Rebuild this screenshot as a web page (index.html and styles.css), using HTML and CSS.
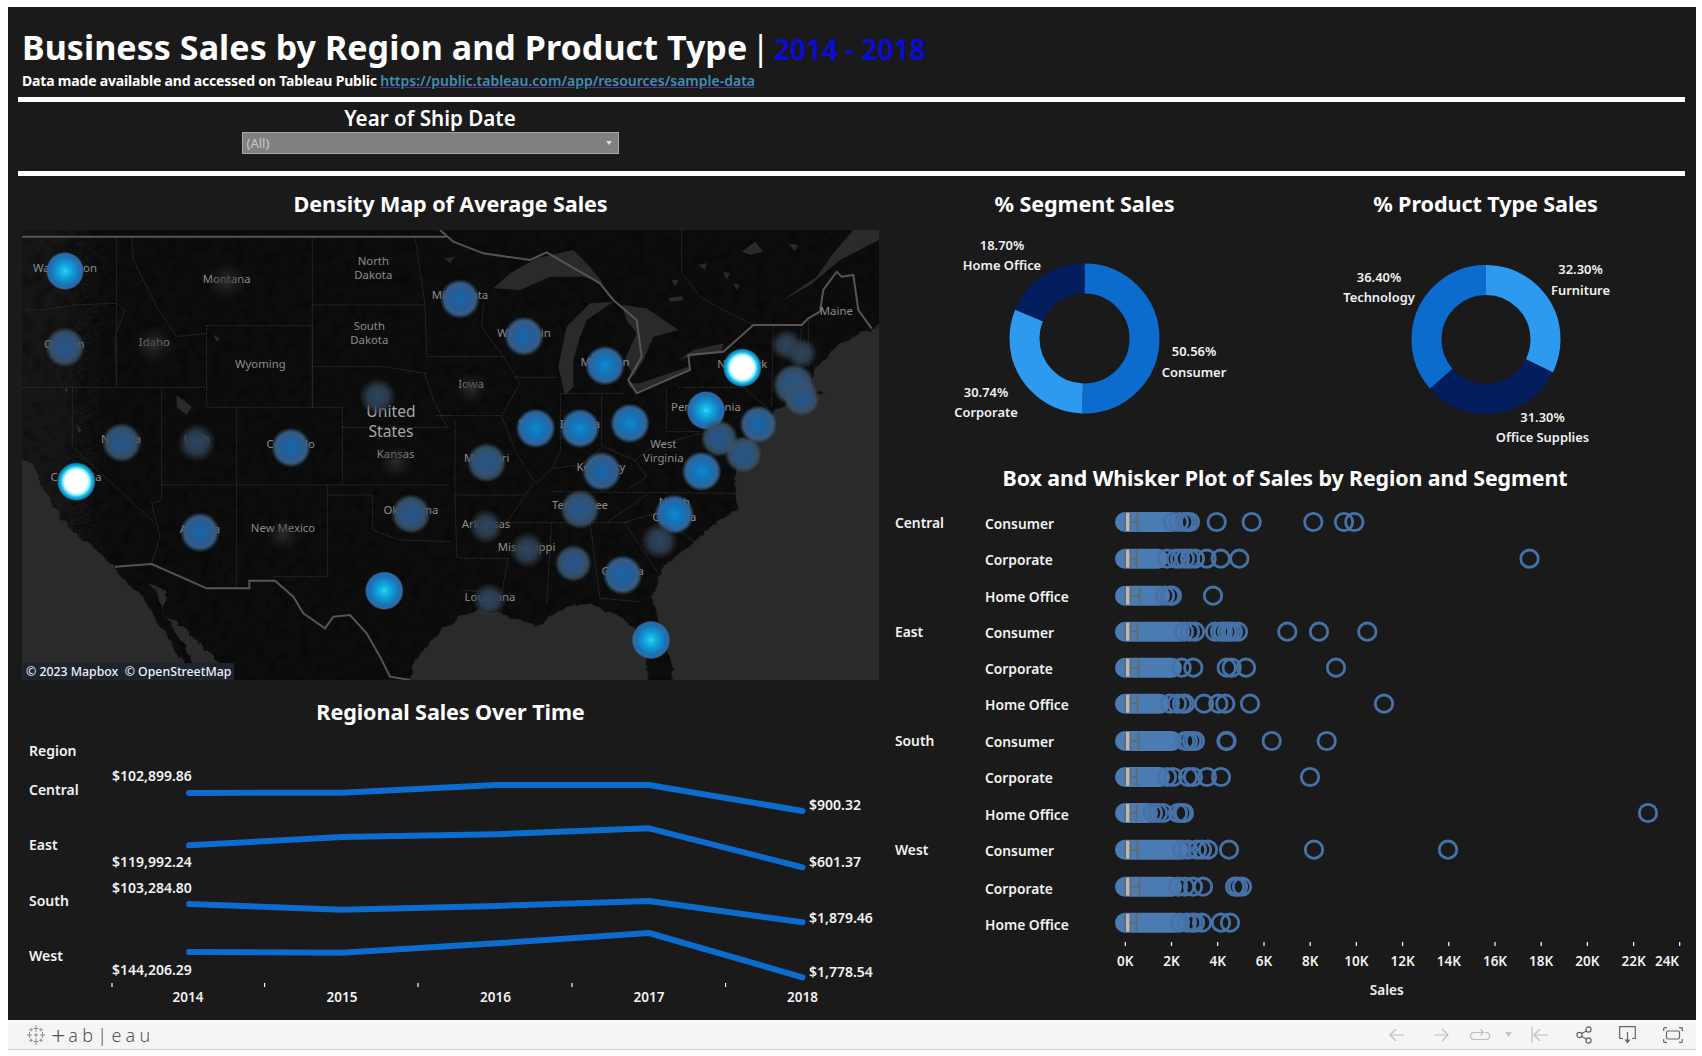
FILE: index.html
```html
<!DOCTYPE html>
<html lang="en">
<head>
<meta charset="utf-8">
<title>Business Sales by Region and Product Type</title>
<link rel="stylesheet" href="styles.css">
</head>
<body>
<main class="viz">
  <header class="head">
    <h1 class="title">Business Sales by Region and Product Type<span class="bar"> | </span><span class="years">2014 - 2018</span></h1>
    <p class="source">Data made available and accessed on Tableau Public <a class="link" href="#">https://public.tableau.com/app/resources/sample-data</a></p>
  </header>
  <div class="rule"></div>
  <section class="filter">
    <div class="filter-label">Year of Ship Date</div>
    <div class="select"><span>(All)</span><i class="caret"></i></div>
  </section>
  <div class="rule"></div>
  <div class="columns">
    <div class="col-left">
      <h2 class="chart-title">Density Map of Average Sales</h2>
      <svg class="map" viewBox="22 230 857 450" width="857" height="450">
        <defs>
          <linearGradient id="land" x1="0" x2="1" y1="0" y2="0">
            <stop offset="0" stop-color="#131313"/><stop offset=".5" stop-color="#0a0a0a"/><stop offset="1" stop-color="#0e0e0e"/>
          </linearGradient>
          <filter id="rough" x="-2%" y="-2%" width="104%" height="104%">
            <feTurbulence type="fractalNoise" baseFrequency=".035" numOctaves="3" seed="4"/>
            <feDisplacementMap in="SourceGraphic" scale="22" xChannelSelector="R" yChannelSelector="G"/>
          </filter>
          <filter id="mottle" x="0" y="0" width="100%" height="100%">
            <feTurbulence type="fractalNoise" baseFrequency=".03" numOctaves="3" seed="9"/>
            <feColorMatrix values="0 0 0 0 0  0 0 0 0 0  0 0 0 0 0  2.2 0 0 0 -1"/>
          </filter>
          <radialGradient id="h-white"><stop offset="0" stop-color="#fff"/><stop offset=".56" stop-color="#fff"/><stop offset=".68" stop-color="#a6f0ff"/><stop offset=".8" stop-color="#12c0e6"/><stop offset=".93" stop-color="#0f7fb4"/><stop offset="1" stop-color="#1b5f8e" stop-opacity=".15"/></radialGradient>
          <radialGradient id="h-strong"><stop offset="0" stop-color="#3fd8f5"/><stop offset=".12" stop-color="#1cc0ea"/><stop offset=".42" stop-color="#109ad6"/><stop offset=".75" stop-color="#1a72b6"/><stop offset=".92" stop-color="#2f69a3"/><stop offset="1" stop-color="#2f69a3" stop-opacity=".08"/></radialGradient>
          <radialGradient id="h-mid"><stop offset="0" stop-color="#0c8ccf"/><stop offset=".42" stop-color="#1472b8"/><stop offset=".8" stop-color="#2f6499"/><stop offset="1" stop-color="#35648f" stop-opacity="0"/></radialGradient>
          <radialGradient id="h-medlow"><stop offset="0" stop-color="#1368ac"/><stop offset=".5" stop-color="#275d95"/><stop offset=".78" stop-color="#355c84"/><stop offset="1" stop-color="#3a5a78" stop-opacity="0"/></radialGradient>
          <radialGradient id="h-low"><stop offset="0" stop-color="#24558a"/><stop offset=".55" stop-color="#2f5278"/><stop offset=".78" stop-color="#3a5468" stop-opacity=".85"/><stop offset="1" stop-color="#3a4e60" stop-opacity="0"/></radialGradient>
          <radialGradient id="h-vlow"><stop offset="0" stop-color="#2c4660"/><stop offset=".55" stop-color="#2d3e50" stop-opacity=".9"/><stop offset="1" stop-color="#2f3a45" stop-opacity="0"/></radialGradient>
          <radialGradient id="h-faint"><stop offset="0" stop-color="#333" stop-opacity=".8"/><stop offset="1" stop-color="#222" stop-opacity="0"/></radialGradient>
          <clipPath id="land-clip"><path d="M60 30H2637V310L2615 325L2520 370L2450 440L2430 500L2470 520L2320 570L2310 590L2250 640L2220 720L2205 760L2210 820L2210 870L2160 900L2080 970L1990 1040L1960 1130L1980 1230L2015 1330L2020 1380H1945L1940 1320L1900 1225L1880 1200L1770 1150L1700 1160L1610 1220L1520 1185L1440 1170L1380 1190L1320 1235L1290 1270L1240 1330L1230 1380H590L540 1310L470 1200L430 1130L380 1090L340 1040L290 990L240 950L180 890L130 800L100 735L60 705Z"/></clipPath>
        </defs>
        <rect class="water" x="22" y="230" width="857" height="450"/>
        <g transform="translate(0 220) scale(.33333)">
          <path class="land rough" d="M30 10H2660V310L2615 325L2520 370L2450 440L2430 500L2470 520L2320 570L2310 590L2250 640L2220 720L2205 760L2210 820L2210 870L2160 900L2080 970L1990 1040L1960 1130L1980 1230L2015 1330L2020 1400H1945L1940 1320L1900 1225L1880 1200L1770 1150L1700 1160L1610 1220L1520 1185L1440 1170L1380 1190L1320 1235L1290 1270L1240 1330L1230 1400H600L540 1310L470 1200L430 1130L380 1090L340 1040L290 990L240 950L180 890L130 800L100 735L30 690Z"/>
          <rect class="mottle" x="60" y="30" width="2580" height="1350" clip-path="url(#land-clip)"/>
          <path class="water rough" d="M452 1092L500 1110L490 1180L560 1230L650 1320L700 1390H625L570 1310L500 1190Z"/>
          <path class="lake" d="M530 525L575 560L560 585L530 560ZM640 345L660 355L650 365ZM230 610L245 630L235 640ZM195 500L205 510L195 520Z"/>
          <path class="states" d="M350 50V500M395 50L400 120L470 260L530 350L620 340M80 270L130 270L220 255L350 250L375 270L345 350L350 500M66 502H620M620 317H937V562H620ZM937 50V562M937 255H1275M937 440H1150L1275 460M217 502V680L460 905M485 502V840L455 850L480 950L455 1030M710 562V1100M937 562H1027V795M485 795H1350M982 795V1070H820M982 825H1118V930L1200 960L1350 965M1027 622H1350M1245 50L1275 255L1280 410H1350M1275 460L1300 540L1340 620M1310 587H1350"/>
          <path class="border" d="M66 50H1340M345 1040L455 1032L620 1105H748V1082H825L880 1130L910 1180L975 1225L1000 1190L1050 1185L1100 1240L1140 1310L1170 1370L1230 1380"/>
        </g>
        <g transform="translate(440 220) scale(.33333)">
          <path class="lake" d="M160 205L210 160L290 115L400 90L440 130L490 190L430 170L330 170L240 210Z"/>
          <path class="lake" d="M355 440L380 320L450 250L520 245L440 300L420 350L400 420L400 500L375 525Z"/>
          <path class="lake" d="M545 255L620 265L715 330L640 350L610 420L580 470L555 420L590 340L560 300Z"/>
          <path class="lake" d="M560 490L590 520L750 450L745 440L600 490Z"/>
          <path class="lake" d="M715 420L760 390L850 370L845 395L750 410Z"/>
          <path class="lake" d="M1317 30H1240L1180 100L1130 170L1020 245L1110 195L1200 120L1317 60Z"/>
          <path class="lake" d="M685 235L725 228L730 240L690 245ZM905 95L945 65L970 95L930 105ZM775 135L800 130L795 150ZM850 155L870 160L860 180ZM1045 70L1075 75L1065 95ZM695 180L715 180L705 200ZM880 190L900 195L890 210ZM15 115L45 110L30 130Z"/>
          <path class="states" d="M0 410H190M130 250L125 320L190 410L240 490L200 560L185 590L230 700L280 780L290 790M0 587H185M225 472H350M362 520V690L340 740L290 790M485 520V680M362 520H550M680 505V635H780M715 502H910L990 570M335 815L885 820M45 600V825H250M45 825L50 1010L70 1015H205M200 908H575M335 908L320 1150M450 908L480 1135L605 1145M555 910L655 1060M555 905L650 880L770 970M505 905L625 820M585 720L640 680L780 640M585 720L620 770L560 810M340 745L420 735L490 680L585 720M1000 320L995 560M1085 315L1075 440M1105 300V440M205 1015L185 1120L60 1110M200 908L280 790M725 30V160L780 230L850 270L940 315"/>
          <path class="border" d="M0 30L40 65L130 100L270 120L320 97L480 190L520 240L590 300L605 410L565 480L590 520L750 450L745 405L850 395L940 315H1085L1105 295L1140 275L1150 210L1190 155L1205 170L1240 165L1255 270L1295 325"/>
        </g>
        <g class="map-labels" transform="translate(0 220) scale(.33333)">
          <text x="195" y="143">Washington</text><text x="680" y="175">Montana</text>
          <text x="1120" y="122">North</text><text x="1120" y="163">Dakota</text>
          <text x="1108" y="316">South</text><text x="1108" y="358">Dakota</text>
          <text x="463" y="364">Idaho</text><text x="193" y="370">Oregon</text>
          <text x="781" y="432">Wyoming</text><text x="363" y="656">Nevada</text>
          <text x="590" y="655">Utah</text><text x="872" y="671">Colorado</text>
          <text x="228" y="771">California</text><text x="600" y="925">Arizona</text>
          <text x="849" y="924">New Mexico</text><text x="1187" y="700">Kansas</text>
          <text class="country" x="1173" y="573">United</text><text class="country" x="1173" y="633">States</text>
          <text x="1233" y="870">Oklahoma</text>
          <text x="1380" y="225">Minnesota</text><text x="1572" y="337">Wisconsin</text>
          <text x="1413" y="492">Iowa</text><text x="1815" y="425">Michigan</text>
          <text x="1607" y="612">Illinois</text><text x="1740" y="612">Indiana</text>
          <text x="1460" y="713">Missouri</text><text x="1803" y="741">Kentucky</text>
          <text x="1990" y="671">West</text><text x="1990" y="713">Virginia</text>
          <text x="2118" y="561">Pennsylvania</text><text x="2227" y="431">New York</text>
          <text x="2509" y="273">Maine</text><text x="1740" y="855">Tennessee</text>
          <text x="1458" y="911">Arkansas</text><text x="1580" y="979">Mississippi</text>
          <text x="1470" y="1129">Louisiana</text><text x="1868" y="1051">Georgia</text>
          <text x="2023" y="845">North</text><text x="2023" y="890">Carolina</text>
        </g>
        <g transform="translate(0 220) scale(.33333)">
          <circle class="spot faint" cx="680" cy="185" r="60"/><circle class="spot faint" cx="463" cy="375" r="60"/>
          <circle class="spot faint" cx="849" cy="945" r="50"/><circle class="spot faint" cx="1187" cy="725" r="50"/>
          <circle class="spot faint" cx="1413" cy="505" r="50"/>
          <circle class="spot vlow" cx="1133" cy="530" r="56"/><circle class="spot low" cx="195" cy="382" r="60"/>
          <circle class="spot strong" cx="195" cy="153" r="57"/><circle class="spot low" cx="365" cy="668" r="60"/>
          <circle class="spot vlow" cx="590" cy="668" r="58"/><circle class="spot medlow" cx="873" cy="683" r="60"/>
          <circle class="spot white" cx="229" cy="785" r="58"/><circle class="spot medlow" cx="600" cy="937" r="60"/>
          <circle class="spot strong" cx="1153" cy="1112" r="58"/><circle class="spot low" cx="1233" cy="882" r="60"/>
          <circle class="spot medlow" cx="1380" cy="237" r="60"/><circle class="spot medlow" cx="1572" cy="349" r="60"/>
          <circle class="spot mid" cx="1815" cy="437" r="60"/><circle class="spot white" cx="2227" cy="443" r="58"/>
          <circle class="spot strong" cx="2118" cy="571" r="58"/><circle class="spot mid" cx="1607" cy="625" r="60"/>
          <circle class="spot mid" cx="1740" cy="625" r="60"/><circle class="spot mid" cx="1890" cy="610" r="60"/>
          <circle class="spot low" cx="1460" cy="728" r="60"/><circle class="spot medlow" cx="1805" cy="754" r="60"/>
          <circle class="spot mid" cx="2105" cy="754" r="60"/><circle class="spot low" cx="2158" cy="655" r="56"/>
          <circle class="spot medlow" cx="2275" cy="613" r="57"/><circle class="spot low" cx="2230" cy="703" r="56"/>
          <circle class="spot low" cx="1740" cy="868" r="60"/><circle class="spot mid" cx="2023" cy="883" r="60"/>
          <circle class="spot vlow" cx="1978" cy="963" r="56"/><circle class="spot vlow" cx="1458" cy="920" r="52"/>
          <circle class="spot vlow" cx="1582" cy="990" r="54"/><circle class="spot low" cx="1720" cy="1030" r="56"/>
          <circle class="spot medlow" cx="1868" cy="1065" r="60"/><circle class="spot vlow" cx="1468" cy="1140" r="52"/>
          <circle class="spot strong" cx="1953" cy="1260" r="58"/>
          <circle class="spot vlow" cx="2360" cy="375" r="48"/><circle class="spot vlow" cx="2405" cy="400" r="48"/>
          <circle class="spot low" cx="2382" cy="495" r="64"/><circle class="spot low" cx="2405" cy="535" r="54"/>
        </g>
        <rect class="credit-bg" x="23" y="663" width="211" height="17"/>
        <text class="credit" x="26" y="671.5">© 2023 Mapbox  © OpenStreetMap</text>
      </svg>
      <h2 class="chart-title chart-title-low">Regional Sales Over Time</h2>
      <svg class="lines" viewBox="22 730 857 290" width="857" height="290">
        <g class="mark-label line-label">
          <text x="29" y="751">Region</text><text x="29" y="790">Central</text><text x="29" y="845">East</text><text x="29" y="901">South</text><text x="29" y="956">West</text>
          <text x="112" y="776">$102,899.86</text><text x="112" y="862">$119,992.24</text><text x="112" y="888">$103,284.80</text><text x="112" y="970">$144,206.29</text>
          <text x="809" y="805">$900.32</text><text x="809" y="862">$601.37</text><text x="809" y="918">$1,879.46</text><text x="809" y="972">$1,778.54</text>
        </g>
        <g class="trend">
          <polyline points="189,793 342,792.7 496.5,785 649,785 802.5,811"/>
          <polyline points="189,845.3 342,837 496.5,834.3 649,828.3 802.5,867.3"/>
          <polyline points="189,904 342,909.7 496.5,906 649,901 802.5,922.3"/>
          <polyline points="189,952 342,952.7 496.5,943.3 649,933 802.5,977.3"/>
        </g>
        <path class="tick" d="M112 983V987M264.6 983V987M418 983V987M572 983V987M725.6 983V987"/>
        <g class="axis-label">
          <text x="188" y="997">2014</text><text x="342" y="997">2015</text><text x="495.5" y="997">2016</text><text x="649" y="997">2017</text><text x="802.5" y="997">2018</text>
        </g>
      </svg>
    </div>
    <div class="col-right">
      <div class="donuts">
        <figure class="donut-panel">
          <h2 class="chart-title">% Segment Sales</h2>
          <svg class="donut" viewBox="884 230 401 226" width="401" height="226">
            <g transform="rotate(-90 1084.5 338.5)">
              <circle class="seg seg-mid" cx="1084.5" cy="338.5" r="60" pathLength="100" stroke-dasharray="50.56 100"/>
              <circle class="seg seg-light" cx="1084.5" cy="338.5" r="60" pathLength="100" stroke-dasharray="30.74 100" stroke-dashoffset="-50.56"/>
              <circle class="seg seg-dark" cx="1084.5" cy="338.5" r="60" pathLength="100" stroke-dasharray="18.7 100" stroke-dashoffset="-81.3"/>
            </g>
            <g class="donut-label">
              <text x="1002" y="245">18.70%</text><text x="1002" y="265">Home Office</text>
              <text x="1194" y="351">50.56%</text><text x="1194" y="372">Consumer</text>
              <text x="986" y="392">30.74%</text><text x="986" y="412">Corporate</text>
            </g>
          </svg>
        </figure>
        <figure class="donut-panel">
          <h2 class="chart-title">% Product Type Sales</h2>
          <svg class="donut" viewBox="1285 230 401 226" width="401" height="226">
            <g transform="rotate(-90 1486 339.5)">
              <circle class="seg seg-light" cx="1486" cy="339.5" r="59.5" pathLength="100" stroke-dasharray="32.3 100"/>
              <circle class="seg seg-dark" cx="1486" cy="339.5" r="59.5" pathLength="100" stroke-dasharray="31.3 100" stroke-dashoffset="-32.3"/>
              <circle class="seg seg-mid" cx="1486" cy="339.5" r="59.5" pathLength="100" stroke-dasharray="36.4 100" stroke-dashoffset="-63.6"/>
            </g>
            <g class="donut-label">
              <text x="1580.5" y="269">32.30%</text><text x="1580.5" y="290">Furniture</text>
              <text x="1379" y="277">36.40%</text><text x="1379" y="297">Technology</text>
              <text x="1542.5" y="417">31.30%</text><text x="1542.5" y="437">Office Supplies</text>
            </g>
          </svg>
        </figure>
      </div>
      <h2 class="chart-title chart-title-box">Box and Whisker Plot of Sales by Region and Segment</h2>
      <svg class="boxes" viewBox="884 502 810 518" width="810" height="518">
        <defs>
          <g id="box"><rect class="box-dark" x="1124.5" y="-9" width="6.5" height="18"/><rect class="box-light" x="1126" y="-9" width="3.5" height="18"/></g>
        </defs>
        <g class="mark-label box-label">
          <text x="895" y="523">Central</text><text x="895" y="632">East</text><text x="895" y="741.5">South</text><text x="895" y="850">West</text>
        </g>
        <g class="mark-label box-label">
          <text x="985" y="524">Consumer</text><text x="985" y="560">Corporate</text><text x="985" y="597">Home Office</text>
          <text x="985" y="633">Consumer</text><text x="985" y="669">Corporate</text><text x="985" y="705.5">Home Office</text>
          <text x="985" y="742.5">Consumer</text><text x="985" y="778.5">Corporate</text><text x="985" y="815">Home Office</text>
          <text x="985" y="851">Consumer</text><text x="985" y="889">Corporate</text><text x="985" y="925">Home Office</text>
        </g>
        <g transform="translate(0 522)"><line class="blob" x1="1125" x2="1170"/><circle class="ring" cx="1173" r="8.7"/><circle class="ring" cx="1179" r="8.7"/><circle class="ring" cx="1184" r="8.7"/><circle class="ring" cx="1187" r="8.7"/><circle class="ring" cx="1190" r="8.7"/><circle class="ring" cx="1216.7" r="8.7"/><circle class="ring" cx="1251.7" r="8.7"/><circle class="ring" cx="1313.3" r="8.7"/><circle class="ring" cx="1344" r="8.7"/><circle class="ring" cx="1354.3" r="8.7"/><use href="#box"/><path class="whisk" d="M1131 0H1137.5M1137.5 -9V9"/></g>
        <g transform="translate(0 558.7)"><line class="blob" x1="1125" x2="1158"/><circle class="ring" cx="1167" r="8.7"/><circle class="ring" cx="1176" r="8.7"/><circle class="ring" cx="1180" r="8.7"/><circle class="ring" cx="1185" r="8.7"/><circle class="ring" cx="1190" r="8.7"/><circle class="ring" cx="1195" r="8.7"/><circle class="ring" cx="1206.7" r="8.7"/><circle class="ring" cx="1220.7" r="8.7"/><circle class="ring" cx="1239.3" r="8.7"/><circle class="ring" cx="1529.5" r="8.7"/><use href="#box"/><path class="whisk" d="M1131 0H1136.5M1136.5 -9V9"/></g>
        <g transform="translate(0 595.7)"><line class="blob" x1="1125" x2="1160"/><circle class="ring" cx="1165" r="8.7"/><circle class="ring" cx="1170" r="8.7"/><circle class="ring" cx="1172" r="8.7"/><circle class="ring" cx="1213" r="8.7"/><use href="#box"/><path class="whisk" d="M1131 0H1139.5M1139.5 -9V9"/></g>
        <g transform="translate(0 631.7)"><line class="blob" x1="1125" x2="1180"/><circle class="ring" cx="1184" r="8.7"/><circle class="ring" cx="1190" r="8.7"/><circle class="ring" cx="1195" r="8.7"/><circle class="ring" cx="1215" r="8.7"/><circle class="ring" cx="1220" r="8.7"/><circle class="ring" cx="1223" r="8.7"/><circle class="ring" cx="1227" r="8.7"/><circle class="ring" cx="1230" r="8.7"/><circle class="ring" cx="1233" r="8.7"/><circle class="ring" cx="1238" r="8.7"/><circle class="ring" cx="1287.3" r="8.7"/><circle class="ring" cx="1319" r="8.7"/><circle class="ring" cx="1367.3" r="8.7"/><use href="#box"/><path class="whisk" d="M1131 0H1137.5M1137.5 -9V9"/></g>
        <g transform="translate(0 667.7)"><line class="blob" x1="1125" x2="1172"/><circle class="ring" cx="1181.7" r="8.7"/><circle class="ring" cx="1193.3" r="8.7"/><circle class="ring" cx="1226.7" r="8.7"/><circle class="ring" cx="1231.7" r="8.7"/><circle class="ring" cx="1246" r="8.7"/><circle class="ring" cx="1336" r="8.7"/><use href="#box"/><path class="whisk" d="M1131 0H1138.5M1138.5 -9V9"/></g>
        <g transform="translate(0 703.7)"><line class="blob" x1="1125" x2="1160"/><circle class="ring" cx="1170" r="8.7"/><circle class="ring" cx="1177" r="8.7"/><circle class="ring" cx="1182" r="8.7"/><circle class="ring" cx="1185" r="8.7"/><circle class="ring" cx="1204" r="8.7"/><circle class="ring" cx="1218.3" r="8.7"/><circle class="ring" cx="1225.3" r="8.7"/><circle class="ring" cx="1250" r="8.7"/><circle class="ring" cx="1384" r="8.7"/><use href="#box"/><path class="whisk" d="M1131 0H1137.5M1137.5 -9V9"/></g>
        <g transform="translate(0 741)"><line class="blob" x1="1125" x2="1172"/><circle class="ring" cx="1185" r="8.7"/><circle class="ring" cx="1188" r="8.7"/><circle class="ring" cx="1192" r="8.7"/><circle class="ring" cx="1195" r="8.7"/><circle class="ring thick" cx="1226.5" r="8.4"/><circle class="ring" cx="1271.7" r="8.7"/><circle class="ring" cx="1326.7" r="8.7"/><use href="#box"/><path class="whisk" d="M1131 0H1138.5M1138.5 -9V9"/></g>
        <g transform="translate(0 777)"><line class="blob" x1="1125" x2="1160"/><circle class="ring" cx="1167" r="8.7"/><circle class="ring" cx="1173" r="8.7"/><circle class="ring" cx="1188" r="8.7"/><circle class="ring" cx="1193" r="8.7"/><circle class="ring" cx="1207" r="8.7"/><circle class="ring" cx="1221" r="8.7"/><circle class="ring" cx="1310" r="8.7"/><use href="#box"/><path class="whisk" d="M1131 0H1136.5M1136.5 -9V9"/></g>
        <g transform="translate(0 813)"><line class="blob" x1="1125" x2="1148"/><circle class="ring" cx="1153" r="8.7"/><circle class="ring" cx="1158" r="8.7"/><circle class="ring" cx="1163" r="8.7"/><circle class="ring" cx="1178" r="8.7"/><circle class="ring" cx="1182" r="8.7"/><circle class="ring" cx="1184" r="8.7"/><circle class="ring" cx="1648" r="8.7"/><use href="#box"/><path class="whisk" d="M1131 0H1136.5M1136.5 -9V9"/></g>
        <g transform="translate(0 849.7)"><line class="blob" x1="1125" x2="1178"/><circle class="ring" cx="1182" r="8.7"/><circle class="ring" cx="1188" r="8.7"/><circle class="ring" cx="1197" r="8.7"/><circle class="ring" cx="1202" r="8.7"/><circle class="ring" cx="1208" r="8.7"/><circle class="ring" cx="1229" r="8.7"/><circle class="ring" cx="1314" r="8.7"/><circle class="ring" cx="1448" r="8.7"/><use href="#box"/><path class="whisk" d="M1131 0H1137.5M1137.5 -9V9"/></g>
        <g transform="translate(0 886.7)"><line class="blob" x1="1125" x2="1172"/><circle class="ring" cx="1178" r="8.7"/><circle class="ring" cx="1185" r="8.7"/><circle class="ring" cx="1193" r="8.7"/><circle class="ring" cx="1203" r="8.7"/><circle class="ring" cx="1235" r="8.7"/><circle class="ring" cx="1238" r="8.7"/><circle class="ring" cx="1242" r="8.7"/><use href="#box"/><path class="whisk" d="M1131 0H1139.5M1139.5 -9V9"/></g>
        <g transform="translate(0 922.7)"><line class="blob" x1="1125" x2="1176"/><circle class="ring" cx="1180" r="8.7"/><circle class="ring" cx="1187" r="8.7"/><circle class="ring" cx="1192" r="8.7"/><circle class="ring" cx="1195" r="8.7"/><circle class="ring" cx="1202" r="8.7"/><circle class="ring" cx="1221" r="8.7"/><circle class="ring" cx="1230" r="8.7"/><use href="#box"/><path class="whisk" d="M1131 0H1136.5M1136.5 -9V9"/></g>
        <path class="tick" d="M1125.3 942V946M1171.5 942V946M1217.7 942V946M1264 942V946M1310.2 942V946M1356.4 942V946M1402.6 942V946M1448.8 942V946M1495 942V946M1541.2 942V946M1587.4 942V946M1633.6 942V946M1679.7 942V946"/>
        <g class="axis-label">
          <text x="1125.3" y="961">0K</text><text x="1171.5" y="961">2K</text><text x="1217.7" y="961">4K</text><text x="1264" y="961">6K</text><text x="1310.2" y="961">8K</text><text x="1356.4" y="961">10K</text><text x="1402.6" y="961">12K</text><text x="1448.8" y="961">14K</text><text x="1495" y="961">16K</text><text x="1541.2" y="961">18K</text><text x="1587.4" y="961">20K</text><text x="1633.6" y="961">22K</text><text x="1667" y="961">24K</text>
          <text x="1386.7" y="990">Sales</text>
        </g>
      </svg>
    </div>
  </div>
</main>
<footer class="toolbar">
  <div class="logo">
    <svg class="logo-mark" viewBox="0 0 20 20" width="20" height="20"><path d="M10 0V7M7.5 3.5H12.5M10 13V20M7.5 16.5H12.5M3.5 7V13M1 10H6M16.5 7V13M14 10H19M5 3V6.5M3.2 4.7H6.8M15 3V6.5M13.2 4.7H16.8M5 13.5V17M3.2 15.3H6.8M15 13.5V17M13.2 15.3H16.8M10 8V12M8 10H12"/></svg>
    <span class="logo-text"><span class="logo-t">+</span>ab|eau</span>
  </div>
  <div class="tools">
    <svg class="tool off t-back" viewBox="0 0 15 14" width="15" height="14"><path d="M15 7H1M7 1L1 7L7 13"/></svg>
    <svg class="tool off t-fwd" viewBox="0 0 15 14" width="15" height="14"><path d="M0 7H14M8 1L14 7L8 13"/></svg>
    <svg class="tool off t-redo" viewBox="0 0 20 12" width="20" height="12"><path d="M13 3.5H4a3.5 3.5 0 0 0 0 7H16a3.5 3.5 0 0 0 0-7H15M10.5 0.5L13.5 3.5L10.5 6.5"/></svg>
    <svg class="t-caret" viewBox="0 0 7 5" width="7" height="5"><path d="M0 0H7L3.5 5Z"/></svg>
    <svg class="tool off t-first" viewBox="0 0 17 16" width="17" height="16"><path d="M1 0V16M17 8H3M9 2L3 8L9 14"/></svg>
    <svg class="tool on t-share" viewBox="0 0 16 18" width="16" height="18"><circle cx="3.5" cy="9" r="2.6"/><circle cx="12.5" cy="3.5" r="2.6"/><circle cx="12.5" cy="14.5" r="2.6"/><path d="M5.8 7.6L10.2 4.9M5.8 10.4L10.2 13.1"/></svg>
    <svg class="tool on t-down" viewBox="0 0 17 18" width="17" height="18"><path d="M4 12.5H.7V.7H16.3V12.5H13M8.5 6V14"/><path class="solid" d="M5.5 13.5H11.5L8.5 17.5Z"/></svg>
    <svg class="tool on t-full" viewBox="0 0 20 16" width="20" height="16"><rect x="3.5" y="4" width="13" height="8" rx="1.5"/><path d="M.7 4V1.5Q.7.7 1.5.7H4M16 .7H18.5Q19.3.7 19.3 1.5V4M.7 12V14.5Q.7 15.3 1.5 15.3H4M16 15.3H18.5Q19.3 15.3 19.3 14.5V12"/></svg>
  </div>
</footer>
</body>
</html>
```

FILE: styles.css
```css
* { box-sizing: border-box; }
html, body { margin: 0; padding: 0; background: #fff; }
body { font-family: "Noto Sans", "Open Sans", sans-serif; color: #fff; width: 1702px; height: 1056px; overflow: hidden; }
svg { display: block; }
svg text { font-family: "Noto Sans", "Open Sans", sans-serif; }

.viz { margin: 7px 6px 0 8px; height: 1013px; background: #1a1a1a; padding: 0 10px 0 10px; }

.head { height: 90px; padding: 20px 0 0 4px; }
.title { margin: 0; font-size: 34px; line-height: 40px; font-weight: 700; letter-spacing: .06px; white-space: pre; }
.bar { font-weight: 400; word-spacing: -5px; }
.years { color: #0b0be0; font-size: 28px; font-weight: 600; letter-spacing: 0; }
.source { margin: 2px 0 0; font-size: 14px; line-height: 19px; font-weight: 700; letter-spacing: -.18px; white-space: nowrap; }
.link { color: #3f8db5; text-decoration: underline; text-decoration-color: #5a2d91; font-weight: 600; letter-spacing: 0; }

.rule { width: 1667px; height: 5px; background: #fff; }

.filter { height: 69px; width: 824px; display: flex; flex-direction: column; align-items: center; padding-top: 2px; }
.filter-label { font-size: 20.6px; line-height: 28px; font-weight: 600; }
.select { width: 377px; height: 22px; background: #808080; border: 1px solid #a8a8a8; display: flex; align-items: center; justify-content: space-between; padding: 0 6px 0 4px; font-size: 13px; color: #c8c8c8; }
.caret { width: 0; height: 0; border-left: 3px solid transparent; border-right: 3px solid transparent; border-top: 4px solid #ddd; }

.columns { display: flex; margin-left: 4px; }
.col-left { width: 857px; margin-right: 5px; }
.col-right { width: 810px; margin-right: -10px; }

.chart-title { margin: 0; height: 54px; padding-top: 13px; font-size: 21.6px; line-height: 30px; font-weight: 700; letter-spacing: -.1px; text-align: center; white-space: nowrap; }
.chart-title-low { height: 50px; padding-top: 17px; }
.chart-title-box { height: 46px; padding: 7px 8px 0 0; font-size: 21.4px; }

.map .water { fill: #2a2a2a; }
.map .land { fill: url(#land); }
.map .rough { filter: url(#rough); }
.map .mottle { filter: url(#mottle); opacity: .4; }
.map .lake { fill: #2a2a2a; }
.map .states { fill: none; stroke: #2f2f2f; stroke-width: 3; stroke-dasharray: 5 3; }
.map .border { fill: none; stroke: #555; stroke-width: 6; }
.map-labels text { font-size: 34px; fill: #8c8c8c; text-anchor: middle; dominant-baseline: central; }
.map-labels .country { font-size: 47px; fill: #a6a6a6; }
.spot.white { fill: url(#h-white); }
.spot.strong { fill: url(#h-strong); }
.spot.mid { fill: url(#h-mid); }
.spot.medlow { fill: url(#h-medlow); }
.spot.low { fill: url(#h-low); }
.spot.vlow { fill: url(#h-vlow); }
.spot.faint { fill: url(#h-faint); }
.credit-bg { fill: #1e2330; }
.credit { font-size: 12.3px; font-weight: 500; fill: #f0f0f0; dominant-baseline: central; white-space: pre; }

.mark-label text { font-size: 13.5px; font-weight: 600; fill: #f2f2f2; dominant-baseline: central; }
.line-label { transform: translateY(-1px); }
.line-label text { font-size: 14px; }
.box-label { transform: translateY(-1px); }
.box-label text { font-size: 13.8px; }
.axis-label text { font-size: 13.5px; font-weight: 600; fill: #f2f2f2; text-anchor: middle; dominant-baseline: central; }
.donut-label text { font-size: 12.9px; font-weight: 600; fill: #f2f2f2; text-anchor: middle; dominant-baseline: central; }
.trend polyline { fill: none; stroke: #0b6cce; stroke-width: 6; stroke-linecap: round; stroke-linejoin: round; }
.tick { stroke: #fff; stroke-width: 1.2; fill: none; }

.donuts { display: flex; height: 280px; }
.donut-panel { margin: 0; width: 401px; }
.seg { fill: none; stroke-width: 30; }
.seg-mid { stroke: #0b6cce; }
.seg-light { stroke: #2d99ef; }
.seg-dark { stroke: #031d5f; }

.blob { stroke: #4a7bb2; stroke-width: 20; stroke-linecap: round; }
.ring { fill: none; stroke: #4672a8; stroke-width: 2.8; }
.ring.thick { stroke-width: 3.6; }
.box-dark { fill: #666; }
.box-light { fill: #b4b8bd; }
.whisk { fill: none; stroke: #666; stroke-width: 1.6; }

.toolbar { margin: 0 6px 0 8px; height: 30px; background: #f5f5f5; border-bottom: 1px solid #ccc; display: flex; align-items: center; justify-content: space-between; padding: 0 13px 0 18px; }
.logo { display: flex; align-items: center; gap: 5px; }
.logo-mark { stroke: #8a8f94; stroke-width: 1; fill: none; }
.logo-text { font-size: 18px; line-height: 20px; color: #555; letter-spacing: 4.3px; font-weight: 300; display: flex; align-items: center; }
.logo-t { font-size: 25px; letter-spacing: 3px; }
.tools { display: flex; align-items: center; }
.tool { fill: none; stroke-width: 1.2; }
.off { stroke: #bdbdbd; }
.on { stroke: #666; }
.solid { fill: #666; stroke: none; }
.t-caret { fill: #c4c4c4; margin-left: 15px; }
.t-fwd { margin-left: 30px; }
.t-redo { margin-left: 21px; }
.t-first { margin-left: 19px; }
.t-share { margin-left: 28px; }
.t-down { margin-left: 27px; }
.t-full { margin-left: 27px; }
```
